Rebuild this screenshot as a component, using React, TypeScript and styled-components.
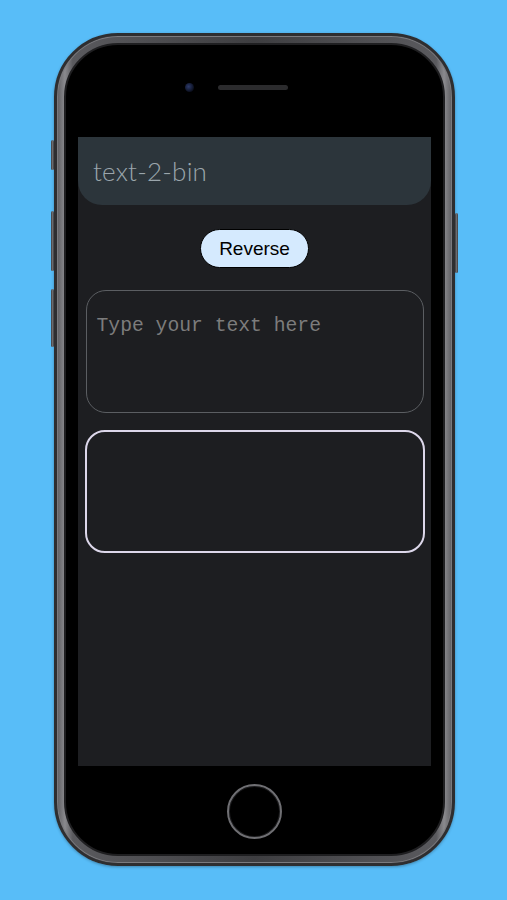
import React from 'react';
import styled, {createGlobalStyle} from 'styled-components';

const GlobalStyle = createGlobalStyle`
  html, body {
    margin: 0;
    padding: 0;
    background: #58bdf8;
  }
  #root {
    min-height: 100vh;
  }
`;

const Page = styled.div`
  width: 507px;
  height: 900px;
  display: flex;
  justify-content: center;
  padding: 33px 0 0 2px;
  box-sizing: border-box;
  background: #58bdf8;
  overflow: hidden;
`;

// metal frame round the phone
const Phone = styled.div`
  position: relative;
  width: 401px;
  height: 833px;
  box-sizing: border-box;
  border-radius: 64px;
  border: 3px solid #2e2e30;
  padding: 7px;
  background: linear-gradient(90deg, #5d5d61 0%, #8a8a8e 2%, #5a5a5e 4%, #3e3e41 50%, #5a5a5e 96%, #8a8a8e 98%, #5d5d61 100%);
  box-shadow:
    inset 0 0 0 1px #7a7a7e,
    0 1px 3px rgba(0, 0, 0, 0.3);
`;

const Face = styled.div`
  height: 100%;
  box-sizing: border-box;
  border-radius: 54px;
  border: 2px solid #1f1f21;
  background: #000;
  display: flex;
  flex-direction: column;
  align-items: center;
`;

const SideButton = styled.div<{$side: 'left' | 'right'; $top: number; $height: number}>`
  position: absolute;
  top: ${p => p.$top}px;
  ${p => (p.$side === 'left' ? 'left: -6px;' : 'right: -6px;')}
  width: 3px;
  height: ${p => p.$height}px;
  border-radius: 2px;
  background: linear-gradient(90deg, #3a3a3c, #6b6b6f, #3a3a3c);
`;

const TopBezel = styled.div`
  height: 92px;
  width: 100%;
  display: flex;
  align-items: center;
  justify-content: center;
  gap: 24px;
  padding-bottom: 8px;
  box-sizing: border-box;
`;

const Camera = styled.div`
  width: 9px;
  height: 9px;
  border-radius: 50%;
  background: radial-gradient(circle at 40% 40%, #2c3a6a, #0b0f1e 70%);
  margin-left: -36px;
`;

const Speaker = styled.div`
  width: 70px;
  height: 5px;
  border-radius: 3px;
  background: #2b2b2d;
`;

const Screen = styled.div`
  width: 353px;
  height: 629px;
  background: #1d1e21;
  display: flex;
  flex-direction: column;
  align-items: center;
`;

const Header = styled.header`
  align-self: stretch;
  height: 68px;
  background: #2c353b;
  border-radius: 0 0 24px 24px;
  display: flex;
  align-items: center;
  padding-left: 15px;
`;

const Title = styled.h1`
  margin: 0;
  font-family: Lato, 'Noto Sans', sans-serif;
  font-weight: 300;
  font-size: 26px;
  color: #9ba6ac;
  letter-spacing: 0.2px;
`;

const ReverseButton = styled.button`
  margin-top: 24px;
  width: 109px;
  height: 39px;
  border-radius: 20px;
  border: 1.5px solid #000;
  background: #d5eafe;
  font-family: 'Liberation Sans', Arial, sans-serif;
  font-size: 19px;
  color: #000;
  padding: 0;
  cursor: pointer;
`;

const InputArea = styled.textarea`
  margin-top: 22px;
  width: 338px;
  height: 123px;
  box-sizing: border-box;
  border: 1px solid #5b5e62;
  border-radius: 20px;
  background: #1d1e21;
  padding: 24px 9px 9px 10px;
  font-family: 'Liberation Mono', 'Courier New', monospace;
  font-size: 19.7px;
  color: #cfcfcf;
  outline: none;
  resize: none;

  &::placeholder {
    color: #7c7c7c;
  }
`;

const OutputBox = styled.div`
  margin-top: 17px;
  width: 340px;
  height: 123px;
  box-sizing: border-box;
  border: 2px solid #dcd7ea;
  border-radius: 20px;
  background: #1d1e21;
  padding: 12px;
  font-family: 'Liberation Mono', 'Courier New', monospace;
  font-size: 20px;
  color: #dcd7ea;
  overflow: hidden;
  word-break: break-all;
`;

const BottomBezel = styled.div`
  flex: 1;
  width: 100%;
  display: flex;
  align-items: center;
  justify-content: center;
  padding-top: 2px;
`;

const HomeButton = styled.div`
  width: 51px;
  height: 51px;
  border-radius: 50%;
  border: 2px solid #6f6f73;
  box-shadow: inset 0 0 0 1px #1c1c1e;
  background: #000;
`;

export default function App() {
  const [text, setText] = React.useState('');
  const [reversed, setReversed] = React.useState(false);
  const binary = text
    .split('')
    .map(c => c.charCodeAt(0).toString(2).padStart(8, '0'))
    .join(' ');

  return (
    <>
      <GlobalStyle />
      <Page>
        <Phone>
          <SideButton $side="left" $top={104} $height={30} />
          <SideButton $side="left" $top={175} $height={60} />
          <SideButton $side="left" $top={253} $height={58} />
          <SideButton $side="right" $top={177} $height={60} />
          <Face>
            <TopBezel>
              <Camera />
              <Speaker />
            </TopBezel>
            <Screen>
              <Header>
                <Title>text-2-bin</Title>
              </Header>
              <ReverseButton onClick={() => setReversed(r => !r)}>Reverse</ReverseButton>
              <InputArea
                placeholder="Type your text here"
                value={text}
                onChange={e => setText(e.target.value)}
              />
              <OutputBox>{reversed ? binary.split('').reverse().join('') : binary}</OutputBox>
            </Screen>
            <BottomBezel>
              <HomeButton />
            </BottomBezel>
          </Face>
        </Phone>
      </Page>
    </>
  );
}
